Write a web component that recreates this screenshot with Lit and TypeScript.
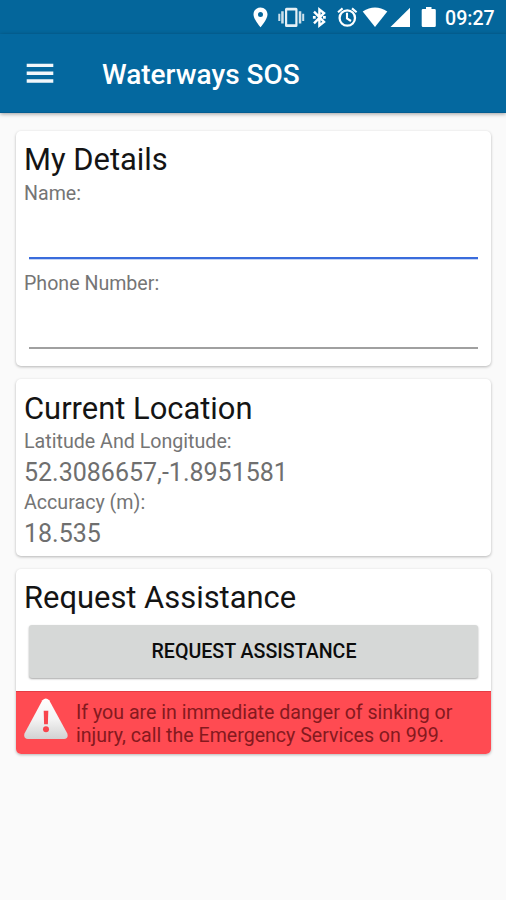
import { LitElement, html, css } from "lit";
import { customElement, property } from "lit/decorators.js";

@customElement("status-bar")
class StatusBar extends LitElement {
  static styles = css`
    :host { display: flex; height: 34px; box-sizing: border-box; background: #04669b; color: #fff; }
    .row { display: flex; margin-left: auto; width: 266px; }
    .icons { display: block; width: 205px; height: 34px; }
    .clock { font: 500 19.6px/37px Roboto, sans-serif; white-space: nowrap; }
  `;
  render() {
    return html`<div class="row">
      <svg class="icons" viewBox="0 0 205 34" fill="#fff">
        <path fill-rule="evenodd" d="M20.5 7.5c-4 0-7 3.1-7 6.900 0 5 7 12.800 7 12.800s7-7.800 7-12.800c0-3.800-3-6.900-7-6.900zm0 4.500a2.500 2.500 0 1 1 0 5 2.500 2.500 0 0 1 0-5z" />
        <path fill-rule="evenodd" opacity=".9" d="M46.500 7.800h9.500q1.500 0 1.500 1.500v16.200q0 1.500-1.500 1.500h-9.500q-1.500 0-1.500-1.500V9.300q0-1.500 1.500-1.500zM47.200 10.500v13.700h8.100V10.500z" />
        <path opacity=".8" d="M41.200 11.200h2.500v12.300h-2.500zM38.300 13.700h2v7.300h-2zM58.800 11.200h2.500v12.300h-2.500zM62.200 13.700h2v7.300h-2z" />
        <path fill="none" stroke="#fff" stroke-width="2.400" d="M74 11.700 84 21.900 79.400 25.500V9.500l4.600 3.600L74 23.300" />
        <path d="M72.900 16h2.800v2.800h-2.800zM83 16h2.800v2.800H83z" />
        <circle cx="107.300" cy="18" r="7.700" fill="none" stroke="#fff" stroke-width="2.300" />
        <path fill="none" stroke="#fff" stroke-width="2.100" d="M107 12.800v5.700l4 2.500M98 12.300l4.600-3.900M116.600 12.300 112 8.400" />
        <path d="M122.700 11.600Q135 3.600 147.300 11.600L135 27.100z" />
        <path d="M170 7.800v19.300h-19.500z" />
        <path d="M186 7h5.500v2h3q1.300 0 1.300 1.300v15.500q0 1.300-1.300 1.300h-11.500q-1.300 0-1.300-1.300V10.300Q181.700 9 183 9h3z" />
      </svg>
      <span class="clock">09:27</span>
    </div>`;
  }
}

@customElement("text-entry")
class TextEntry extends LitElement {
  @property() label = "";
  @property({ type: Boolean, reflect: true }) active = false;
  static styles = css`
    :host { display: block; height: 90px; }
    .label { display: block; font-size: 19.600px; line-height: 26px; padding-top: 1px; color: #757575; }
    .field {
      display: block; box-sizing: border-box; width: 449px; height: 52px; margin: 0 0 0 5px; padding: 0;
      border: 0; border-bottom: 2px solid #a0a0a0; background: none; outline: 0; font: 25px Roboto, sans-serif;
    }
    :host([active]) .field { border-bottom: 2px solid #3a6cdc; box-shadow: 0 .5px 0 #8eacec; }
  `;
  render() {
    return html`<label><span class="label">${this.label}</span><input class="field" /></label>`;
  }
}

@customElement("app-root")
class AppRoot extends LitElement {
  static styles = css`
    :host { display: block; min-height: 900px; background: #fafafa; font-family: Roboto, sans-serif; }
    .toolbar {
      display: flex; align-items: center; height: 79px; box-sizing: border-box; padding: 0 0 0 26px;
      background: #04689f; color: #fff; position: relative;
      box-shadow: 0 1px 4px rgba(0, 0, 0, .38); border-bottom: 1px solid #035d92;
    }
    .menu { width: 28px; height: 22px; margin: 1px 48px 0 0; }
    .title { margin: 0; font-size: 28px; font-weight: 500; line-height: 36px; padding-top: 4px; }
    main { display: grid; gap: 13px; padding: 18px 15px 0 16px; }
    .card {
      background: #fff; border-radius: 5px; overflow: hidden; box-sizing: border-box; padding: 8px 8px 0;
      box-shadow: 0 1px 3px rgba(0, 0, 0, .28);
    }
    .details { height: 235px; }
    .location { height: 177px; }
    .assist { height: 185px; display: flex; flex-direction: column; }
    h2 { margin: 0; font-size: 30.900px; line-height: 41px; font-weight: 400; color: #141414; }
    .location h2 { padding-top: 1px; }
    .label { font-size: 19.650px; line-height: 26px; color: #757575; }
    .value { font-size: 25px; line-height: 35px; color: #6f6f6f; }
    .request {
      margin: 7px 5px 0; height: 53px; flex: none; border: 0; border-radius: 3px; background: #d6d8d7; padding: 0 0 0 1px;
      color: #0c0c0c; font: 500 19.600px/53px Roboto, sans-serif; box-shadow: 0 1px 2px rgba(0, 0, 0, .35);
    }
    .warning {
      display: flex; margin: auto -8px 0; height: 63.500px; box-sizing: border-box; padding: 6px 0 0 7px;
      background: #ff4b52; border-top: 1px solid #e53b43; color: #85191e;
    }
    .sign { width: 46px; height: 43px; flex: none; }
    .warning p { margin: 3px 0 0 7px; font-size: 19.580px; line-height: 23px; white-space: nowrap; }
  `;
  render() {
    return html`
      <status-bar></status-bar>
      <header class="toolbar">
        <svg class="menu" viewBox="0 0 28 22" fill="#f2f7fb"><path d="M.7.700h26.600v3.400H.7zM.7 8.500h26.600v3.400H.7zM.7 16.300h26.600v3.400H.7z" /></svg>
        <h1 class="title">Waterways SOS</h1>
      </header>
      <main>
        <section class="card details">
          <h2>My Details</h2>
          <text-entry label="Name:" active></text-entry>
          <text-entry label="Phone Number:"></text-entry>
        </section>
        <section class="card location">
          <h2>Current Location</h2>
          <div class="label">Latitude And Longitude:</div>
          <div class="value">52.3086657,-1.8951581</div>
          <div class="label">Accuracy (m):</div>
          <div class="value">18.535</div>
        </section>
        <section class="card assist">
          <h2>Request Assistance</h2>
          <button class="request">REQUEST ASSISTANCE</button>
          <div class="warning">
            <svg class="sign" viewBox="0 0 46 43">
              <defs><linearGradient id="g" x1="0" y1="0" x2="0" y2="1"><stop offset="0" stop-color="#fff" /><stop offset=".5" stop-color="#f4f4f4" /><stop offset="1" stop-color="#d2d2d2" /></linearGradient></defs>
              <path fill="url(#g)" d="M19.400 2.200Q22.800-1.300 26.200 2.200L44.300 35.500Q45.800 40.500 41 41H5Q.2 40.500 1.500 35.500z" />
              <path fill="#f8454c" d="M20.700 12.700h4.600l-.4 13.500h-3.800z" /><circle cx="23" cy="31.200" r="3" fill="#f8454c" />
            </svg>
            <p>If you are in immediate danger of sinking or<br />injury, call the Emergency Services on 999.</p>
          </div>
        </section>
      </main>`;
  }
}
